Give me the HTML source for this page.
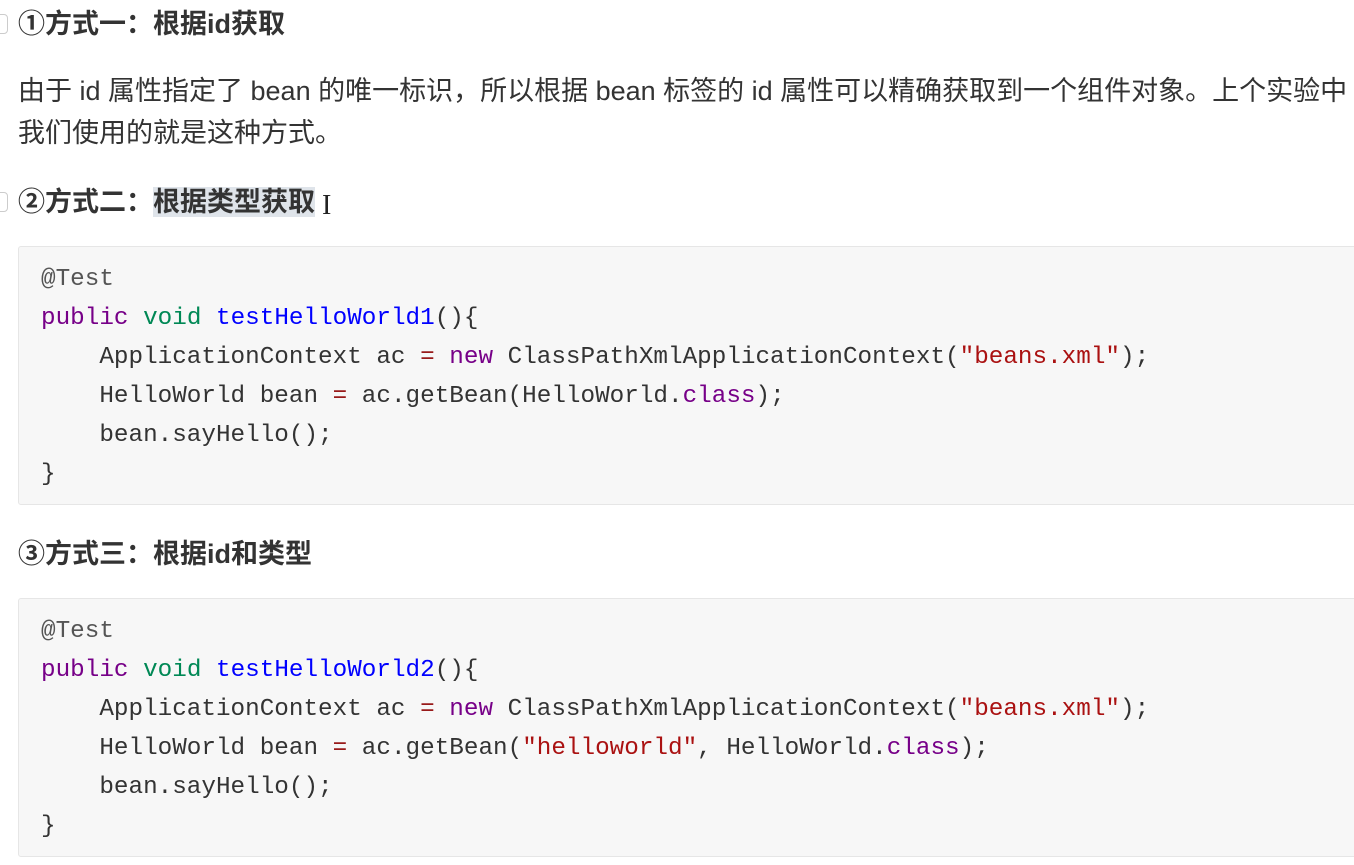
<!DOCTYPE html>
<html><head><meta charset="utf-8"><style>
body{margin:0;width:1354px;height:865px;overflow:hidden;background:#fff;font-family:"Liberation Sans","Noto Sans CJK SC",sans-serif;color:#333;position:relative}
.h{position:absolute;left:18px;font-size:27px;font-weight:bold;color:#333;white-space:nowrap;line-height:30px}
.p{position:absolute;left:18px;font-size:27px;white-space:nowrap;line-height:41px;color:#333}
.mark{position:absolute;left:-8px;width:14px;height:18px;border:1px solid #ccc;border-radius:4px}
.code{position:absolute;left:18px;width:1345px;height:259px;background:#f7f7f7;border:1px solid #e6e6e6;border-radius:3px;box-sizing:border-box}
.code pre{margin:0;position:absolute;left:22px;top:13px;font-family:"Liberation Mono",monospace;font-size:24.3px;line-height:39px;color:#333}
.sb{position:absolute;right:0;width:4px;background:#bbb;border-radius:3px}
.k{color:#770088}.t{color:#008855}.f{color:#0000ff}.o{color:#981a1a}.s{color:#aa1111}.a{color:#555}
.sel{background:#dfe4ea}
</style></head><body>
<div class="mark" style="top:14px"></div>
<div class="h" style="top:9px">①方式一：根据id获取</div>
<div class="p" style="top:71px">由于 id 属性指定了 bean 的唯一标识，所以根据 bean 标签的 id 属性可以精确获取到一个组件对象。上个实验中</div>
<div class="p" style="top:113px">我们使用的就是这种方式。</div>
<div class="mark" style="top:192px"></div>
<div class="h" style="top:187px">②方式二：<span class="sel">根据类型获取</span></div>
<div style="position:absolute;left:322px;top:190px;font-size:28px;color:#222;font-family:'Liberation Serif',serif">I</div>
<div class="code" style="top:246px"><pre><span class="a">@Test</span>
<span class="k">public</span> <span class="t">void</span> <span class="f">testHelloWorld1</span>(){
    ApplicationContext ac <span class="o">=</span> <span class="k">new</span> ClassPathXmlApplicationContext(<span class="s">"beans.xml"</span>);
    HelloWorld bean <span class="o">=</span> ac.getBean(HelloWorld.<span class="k">class</span>);
    bean.sayHello();
}</pre><div class="sb" style="top:52px;height:85px"></div><div class="sb" style="top:170px;height:85px"></div></div>
<div class="h" style="top:539px">③方式三：根据id和类型</div>
<div class="code" style="top:598px"><pre><span class="a">@Test</span>
<span class="k">public</span> <span class="t">void</span> <span class="f">testHelloWorld2</span>(){
    ApplicationContext ac <span class="o">=</span> <span class="k">new</span> ClassPathXmlApplicationContext(<span class="s">"beans.xml"</span>);
    HelloWorld bean <span class="o">=</span> ac.getBean(<span class="s">"helloworld"</span>, HelloWorld.<span class="k">class</span>);
    bean.sayHello();
}</pre></div>
</body></html>
